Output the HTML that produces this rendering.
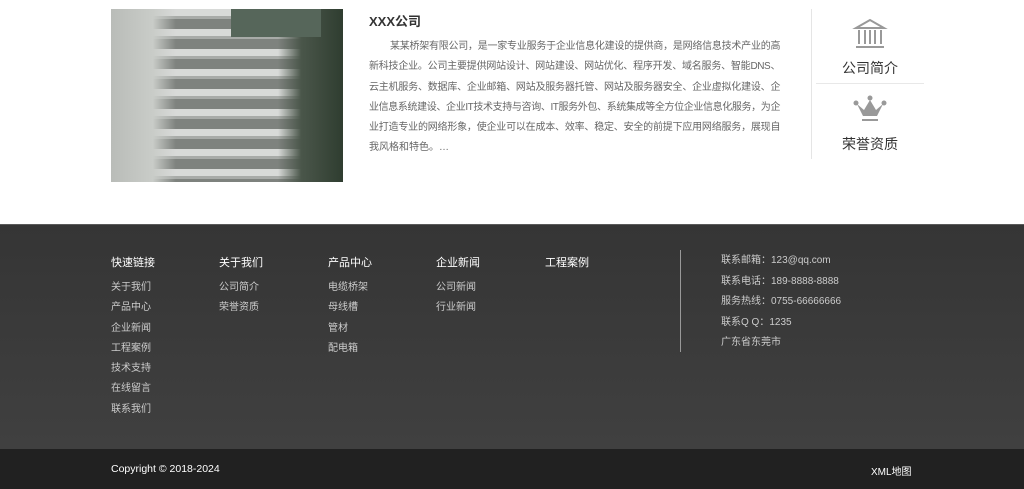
<!DOCTYPE html>
<html><head><meta charset="utf-8"><style>
*{margin:0;padding:0;box-sizing:border-box}
body{width:1024px;height:489px;overflow:hidden;background:#fff;font-family:"Liberation Sans","Noto Sans CJK SC",sans-serif;position:relative}
.a{position:absolute}
.img{left:111px;top:9px;width:232px;height:173px;background:
repeating-linear-gradient(180deg,#dcdedc 0 7px,#a0a4a0 7px 10px,#6b706b 10px 20px);overflow:hidden}
.img:before{content:"";position:absolute;left:0;top:0;width:232px;height:173px;background:linear-gradient(90deg,#b9bcb8 0,#c9ccc8 18%,rgba(200,200,200,.2) 28%,rgba(200,200,200,.2) 72%,#4a564a 82%,#2f3d30 100%)}
.img:after{content:"";position:absolute;left:120px;top:0;width:90px;height:28px;background:#56665a}
.t{left:369px;top:11px;font-size:13px;font-weight:bold;color:#333}
.p{left:369px;top:37px;width:411px;font-size:10px;line-height:20.3px;color:#666;letter-spacing:-0.45px}
.p div{white-space:nowrap;text-align:justify;text-align-last:justify}
.p div.l{text-align-last:left;letter-spacing:0}
.vl{left:811px;top:9px;width:1px;height:150px;background:#e5e5e5}
.side{left:816px;width:108px;text-align:center;font-size:14px;color:#333}
.ft{left:0;top:224px;width:1024px;height:225px;background:linear-gradient(#353535,#404040);border-top:1px solid #5a5a5a}
.bt{left:0;top:449px;width:1024px;height:40px;background:#212121}
.col{top:256px;color:#fff}
.col div{font-size:10px;color:#ccc;line-height:20.3px}
.col h4{font-weight:normal;font-size:11px;margin-bottom:8px;line-height:14px}
.ct{left:721px;top:251px;font-size:10px;color:#ccc;line-height:20.5px}
</style></head><body>
<div class="a img"></div>
<div class="a t">XXX公司</div>
<div class="a p">
<div style="padding-left:21px">某某桥架有限公司，是一家专业服务于企业信息化建设的提供商，是网络信息技术产业的高</div>
<div>新科技企业。公司主要提供网站设计、网站建设、网站优化、程序开发、域名服务、智能DNS、</div>
<div>云主机服务、数据库、企业邮箱、网站及服务器托管、网站及服务器安全、企业虚拟化建设、企</div>
<div>业信息系统建设、企业IT技术支持与咨询、IT服务外包、系统集成等全方位企业信息化服务，为企</div>
<div>业打造专业的网络形象，使企业可以在成本、效率、稳定、安全的前提下应用网络服务，展现自</div>
<div class="l">我风格和特色。…</div>
</div>
<div class="a vl"></div>
<div class="a side" style="top:18px">
<svg width="36" height="32" viewBox="0 0 36 32"><path d="M18 2 L4 10 H32 Z" fill="none" stroke="#999" stroke-width="2"/><path d="M7 12 V26 M13 12 V26 M18 12 V26 M23 12 V26 M29 12 V26" stroke="#999" stroke-width="2"/><path d="M4 29 H32" stroke="#999" stroke-width="2"/></svg>
<div style="margin-top:5px">公司简介</div></div>
<div class="a" style="left:816px;top:83px;width:108px;height:1px;background:#e8e8e8"></div>
<div class="a side" style="top:95px">
<svg width="34" height="30" viewBox="0 0 34 30"><circle cx="17" cy="3" r="2.5" fill="#999"/><circle cx="3" cy="8" r="2.5" fill="#999"/><circle cx="31" cy="8" r="2.5" fill="#999"/><path d="M4 9 L10 21 H24 L30 9 L23 15 L17 5 L11 15 Z" fill="#999"/><path d="M9 25 H25" stroke="#999" stroke-width="2"/></svg>
<div style="margin-top:6px">荣誉资质</div></div>
<div class="a ft"></div>
<div class="a bt"></div>
<div class="a col" style="left:111px"><h4>快速链接</h4><div>关于我们</div><div>产品中心</div><div>企业新闻</div><div>工程案例</div><div>技术支持</div><div>在线留言</div><div>联系我们</div></div>
<div class="a col" style="left:219px"><h4>关于我们</h4><div>公司简介</div><div>荣誉资质</div></div>
<div class="a col" style="left:328px"><h4>产品中心</h4><div>电缆桥架</div><div>母线槽</div><div>管材</div><div>配电箱</div></div>
<div class="a col" style="left:436px"><h4>企业新闻</h4><div>公司新闻</div><div>行业新闻</div></div>
<div class="a col" style="left:545px"><h4>工程案例</h4></div>
<div class="a" style="left:680px;top:250px;width:1px;height:102px;background:#999"></div>
<div class="a ct">联系邮箱：123@qq.com<br>联系电话：189-8888-8888<br>服务热线：0755-66666666<br>联系Q Q：1235<br>广东省东莞市</div>
<div class="a" style="left:111px;top:463px;font-size:10.5px;color:#fff">Copyright © 2018-2024</div>
<div class="a" style="left:871px;top:463px;font-size:10px;color:#fff">XML地图</div>
</body></html>
